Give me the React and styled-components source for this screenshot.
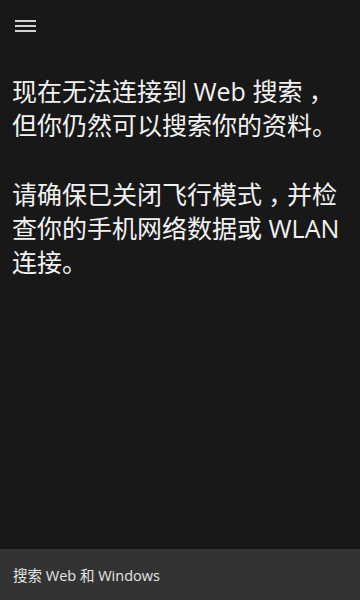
import React from "react";
import styled, { createGlobalStyle } from "styled-components";

const Global = createGlobalStyle`
  html, body { margin: 0; padding: 0; background: #181818; }
  body { font-family: "Open Sans", "Noto Sans CJK SC", sans-serif; }
`;

const Screen = styled.div`
  width: 360px;
  height: 600px;
  background: #181818;
  display: flex;
  flex-direction: column;
  overflow: hidden;
`;

const TopBar = styled.div`
  height: 52px;
  display: flex;
  align-items: center;
  padding-left: 15px;
`;

const Hamburger = styled.button`
  width: 21px;
  height: 12px;
  padding: 0;
  border: none;
  background: transparent;
  display: flex;
  flex-direction: column;
  justify-content: space-between;
  cursor: pointer;
  span {
    display: block;
    height: 2px;
    background: #d4d4d4;
  }
`;

const Content = styled.div`
  flex: 1;
  padding: 21px 12px 0;
`;

const Message = styled.p`
  margin: 0 0 ${(p) => p.$gap || 0}px;
  font-family: "Open Sans", "Noto Sans CJK SC", sans-serif;
  font-size: 25px;
  line-height: 34px;
  color: #f2f2f2;
  white-space: nowrap;
`;

/* full-width comma drawn centred in its em box, as on the phone */
const Punct = styled.span`
  display: inline-block;
  width: 1em;
  text-align: center;
  font-family: "Noto Sans CJK SC", sans-serif;
  font-feature-settings: "halt";
`;

const SearchBar = styled.div`
  height: 51px;
  background: #333333;
  display: flex;
  align-items: center;
  padding-left: 13px;
  font-family: "Open Sans", "Noto Sans CJK SC", sans-serif;
  font-size: 14.5px;
  color: #e6e6e6;
`;

export default function App() {
  return (
    <>
      <Global />
      <Screen>
        <TopBar>
          <Hamburger aria-label="menu">
            <span />
            <span />
            <span />
          </Hamburger>
        </TopBar>
        <Content>
          <Message $gap={34}>
            现在无法连接到 Web 搜索<Punct>，</Punct>
            <br />
            但你仍然可以搜索你的资料。
          </Message>
          <Message>
            请确保已关闭飞行模式<Punct>，</Punct>并检
            <br />
            查你的手机网络数据或 WLAN
            <br />
            连接。
          </Message>
        </Content>
        <SearchBar>搜索 Web 和 Windows</SearchBar>
      </Screen>
    </>
  );
}
